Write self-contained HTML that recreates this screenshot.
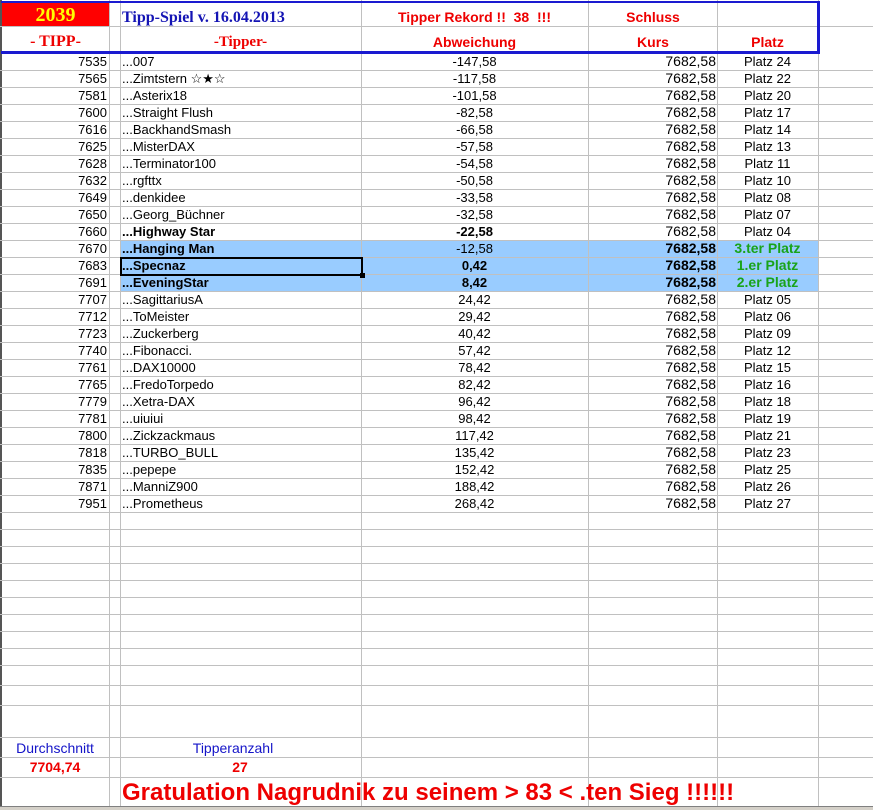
<!DOCTYPE html>
<html><head><meta charset="utf-8"><style>
*{margin:0;padding:0;box-sizing:border-box}
body{width:873px;height:810px;overflow:hidden;background:#fff;font-family:"Liberation Sans",Arial,sans-serif;position:relative}
.h{position:absolute;left:0;width:873px;height:1px;background:#c0c0c0}
.v{position:absolute;top:0;width:1px;height:806px;background:#c0c0c0}
.r{position:absolute;left:0;width:873px;height:17px;font-size:13px;line-height:18px;color:#000}
.r div{position:absolute;top:0;height:17px;white-space:nowrap}
.a{left:0;width:107px;text-align:right}
.c{left:122px}
.d{left:361px;width:227px;text-align:center}
.e{left:588px;width:128px;text-align:right;font-size:14px;line-height:16px}
.f{left:717px;width:101px;text-align:center}
.b{font-weight:bold}
.hl{position:absolute;left:120px;top:240px;width:698px;height:51px;background:#99ccff}
.g{color:#19a319;font-weight:bold;font-size:14px;line-height:16px}
.ser{font-family:"Liberation Serif",serif;font-weight:bold;font-size:15px}
</style></head><body>
<div class="hl"></div>
<div class="v" style="left:109px"></div>
<div class="v" style="left:120px"></div>
<div class="v" style="left:361px"></div>
<div class="v" style="left:588px"></div>
<div class="v" style="left:717px"></div>
<div class="v" style="left:818px"></div>
<div style="position:absolute;left:0;top:0;width:2px;height:806px;background:#555"></div>
<div class="h" style="top:26px"></div>
<div class="h" style="top:70px"></div><div class="h" style="top:87px"></div><div class="h" style="top:104px"></div><div class="h" style="top:121px"></div><div class="h" style="top:138px"></div><div class="h" style="top:155px"></div><div class="h" style="top:172px"></div><div class="h" style="top:189px"></div><div class="h" style="top:206px"></div><div class="h" style="top:223px"></div><div class="h" style="top:240px"></div><div class="h" style="top:257px"></div><div class="h" style="top:274px"></div><div class="h" style="top:291px"></div><div class="h" style="top:308px"></div><div class="h" style="top:325px"></div><div class="h" style="top:342px"></div><div class="h" style="top:359px"></div><div class="h" style="top:376px"></div><div class="h" style="top:393px"></div><div class="h" style="top:410px"></div><div class="h" style="top:427px"></div><div class="h" style="top:444px"></div><div class="h" style="top:461px"></div><div class="h" style="top:478px"></div><div class="h" style="top:495px"></div><div class="h" style="top:512px"></div><div class="h" style="top:529px"></div><div class="h" style="top:546px"></div><div class="h" style="top:563px"></div><div class="h" style="top:580px"></div><div class="h" style="top:597px"></div><div class="h" style="top:614px"></div><div class="h" style="top:631px"></div><div class="h" style="top:648px"></div><div class="h" style="top:665px"></div><div class="h" style="top:685px"></div><div class="h" style="top:705px"></div><div class="h" style="top:737px"></div><div class="h" style="top:757px"></div><div class="h" style="top:777px"></div>
<div style="position:absolute;left:0;top:806px;width:873px;height:4px;background:#d4d0c8;border-top:1px solid #808080"></div>

<!-- header -->
<div class="ser" style="position:absolute;left:2px;top:2px;width:107px;height:24px;background:#f00;color:#ff0;font-size:20px;text-align:center;line-height:27px">2039</div>
<div class="ser" style="position:absolute;left:122px;top:2px;line-height:31px;color:#1414b4;font-size:16px">Tipp-Spiel v. 16.04.2013</div>
<div style="position:absolute;left:361px;top:2px;width:227px;text-align:center;line-height:30px;color:#e00;font-weight:bold;font-size:14px">Tipper Rekord !! &nbsp;38 &nbsp;!!!</div>
<div style="position:absolute;left:588px;top:2px;width:130px;text-align:center;line-height:30px;color:#e00;font-weight:bold;font-size:14px">Schluss</div>
<div class="ser" style="position:absolute;left:2px;top:26px;width:107px;text-align:center;line-height:32px;color:#e00;font-size:16px">- TIPP-</div>
<div class="ser" style="position:absolute;left:120px;top:26px;width:241px;text-align:center;line-height:32px;color:#e00">-Tipper-</div>
<div style="position:absolute;left:361px;top:26px;width:227px;text-align:center;line-height:32px;color:#e00;font-weight:bold;font-size:14px">Abweichung</div>
<div style="position:absolute;left:588px;top:26px;width:130px;text-align:center;line-height:32px;color:#e00;font-weight:bold;font-size:14px">Kurs</div>
<div style="position:absolute;left:717px;top:26px;width:101px;text-align:center;line-height:32px;color:#e00;font-weight:bold;font-size:14px">Platz</div>
<div style="position:absolute;left:1px;top:1px;width:819px;height:53px;border:3px solid #1a1ad0;border-top-width:2px;border-left-width:0"></div>

<div class="r" style="top:53px"><div class="a">7535</div><div class="c">...007</div><div class="d">-147,58</div><div class="e">7682,58</div><div class="f">Platz 24</div></div>
<div class="r" style="top:70px"><div class="a">7565</div><div class="c">...Zimtstern ☆★☆</div><div class="d">-117,58</div><div class="e">7682,58</div><div class="f">Platz 22</div></div>
<div class="r" style="top:87px"><div class="a">7581</div><div class="c">...Asterix18</div><div class="d">-101,58</div><div class="e">7682,58</div><div class="f">Platz 20</div></div>
<div class="r" style="top:104px"><div class="a">7600</div><div class="c">...Straight Flush</div><div class="d">-82,58</div><div class="e">7682,58</div><div class="f">Platz 17</div></div>
<div class="r" style="top:121px"><div class="a">7616</div><div class="c">...BackhandSmash</div><div class="d">-66,58</div><div class="e">7682,58</div><div class="f">Platz 14</div></div>
<div class="r" style="top:138px"><div class="a">7625</div><div class="c">...MisterDAX</div><div class="d">-57,58</div><div class="e">7682,58</div><div class="f">Platz 13</div></div>
<div class="r" style="top:155px"><div class="a">7628</div><div class="c">...Terminator100</div><div class="d">-54,58</div><div class="e">7682,58</div><div class="f">Platz 11</div></div>
<div class="r" style="top:172px"><div class="a">7632</div><div class="c">...rgfttx</div><div class="d">-50,58</div><div class="e">7682,58</div><div class="f">Platz 10</div></div>
<div class="r" style="top:189px"><div class="a">7649</div><div class="c">...denkidee</div><div class="d">-33,58</div><div class="e">7682,58</div><div class="f">Platz 08</div></div>
<div class="r" style="top:206px"><div class="a">7650</div><div class="c">...Georg_Büchner</div><div class="d">-32,58</div><div class="e">7682,58</div><div class="f">Platz 07</div></div>
<div class="r" style="top:223px"><div class="a">7660</div><div class="c b">...Highway Star</div><div class="d b">-22,58</div><div class="e">7682,58</div><div class="f">Platz 04</div></div>
<div class="r" style="top:240px"><div class="a">7670</div><div class="c b">...Hanging Man</div><div class="d">-12,58</div><div class="e b">7682,58</div><div class="f g">3.ter Platz</div></div>
<div class="r" style="top:257px"><div class="a">7683</div><div class="c b">...Specnaz</div><div class="d b">0,42</div><div class="e b">7682,58</div><div class="f g">1.er Platz</div></div>
<div class="r" style="top:274px"><div class="a">7691</div><div class="c b">...EveningStar</div><div class="d b">8,42</div><div class="e b">7682,58</div><div class="f g">2.er Platz</div></div>
<div class="r" style="top:291px"><div class="a">7707</div><div class="c">...SagittariusA</div><div class="d">24,42</div><div class="e">7682,58</div><div class="f">Platz 05</div></div>
<div class="r" style="top:308px"><div class="a">7712</div><div class="c">...ToMeister</div><div class="d">29,42</div><div class="e">7682,58</div><div class="f">Platz 06</div></div>
<div class="r" style="top:325px"><div class="a">7723</div><div class="c">...Zuckerberg</div><div class="d">40,42</div><div class="e">7682,58</div><div class="f">Platz 09</div></div>
<div class="r" style="top:342px"><div class="a">7740</div><div class="c">...Fibonacci.</div><div class="d">57,42</div><div class="e">7682,58</div><div class="f">Platz 12</div></div>
<div class="r" style="top:359px"><div class="a">7761</div><div class="c">...DAX10000</div><div class="d">78,42</div><div class="e">7682,58</div><div class="f">Platz 15</div></div>
<div class="r" style="top:376px"><div class="a">7765</div><div class="c">...FredoTorpedo</div><div class="d">82,42</div><div class="e">7682,58</div><div class="f">Platz 16</div></div>
<div class="r" style="top:393px"><div class="a">7779</div><div class="c">...Xetra-DAX</div><div class="d">96,42</div><div class="e">7682,58</div><div class="f">Platz 18</div></div>
<div class="r" style="top:410px"><div class="a">7781</div><div class="c">...uiuiui</div><div class="d">98,42</div><div class="e">7682,58</div><div class="f">Platz 19</div></div>
<div class="r" style="top:427px"><div class="a">7800</div><div class="c">...Zickzackmaus</div><div class="d">117,42</div><div class="e">7682,58</div><div class="f">Platz 21</div></div>
<div class="r" style="top:444px"><div class="a">7818</div><div class="c">...TURBO_BULL</div><div class="d">135,42</div><div class="e">7682,58</div><div class="f">Platz 23</div></div>
<div class="r" style="top:461px"><div class="a">7835</div><div class="c">...pepepe</div><div class="d">152,42</div><div class="e">7682,58</div><div class="f">Platz 25</div></div>
<div class="r" style="top:478px"><div class="a">7871</div><div class="c">...ManniZ900</div><div class="d">188,42</div><div class="e">7682,58</div><div class="f">Platz 26</div></div>
<div class="r" style="top:495px"><div class="a">7951</div><div class="c">...Prometheus</div><div class="d">268,42</div><div class="e">7682,58</div><div class="f">Platz 27</div></div>

<div style="position:absolute;left:120px;top:257px;width:243px;height:19px;border:2px solid #000"></div>
<div style="position:absolute;left:360px;top:273px;width:5px;height:5px;background:#000"></div>

<div style="position:absolute;left:0;top:739px;width:110px;text-align:center;color:#1414c8;font-size:14px;line-height:18px">Durchschnitt</div>
<div style="position:absolute;left:0;top:758px;width:110px;text-align:center;color:#e00;font-weight:bold;font-size:14px;line-height:18px">7704,74</div>
<div style="position:absolute;left:180px;top:739px;width:106px;text-align:center;color:#1414c8;font-size:14px;line-height:18px">Tipperanzahl</div>
<div style="position:absolute;left:180px;top:758px;width:120px;text-align:center;color:#e00;font-weight:bold;font-size:14px;line-height:18px">27</div>
<div style="position:absolute;left:122px;top:778px;color:#e00;font-weight:bold;font-size:24px;line-height:30px;white-space:nowrap">Gratulation Nagrudnik zu seinem &gt; 83 &lt; .ten Sieg !!!!!!</div>
</body></html>
